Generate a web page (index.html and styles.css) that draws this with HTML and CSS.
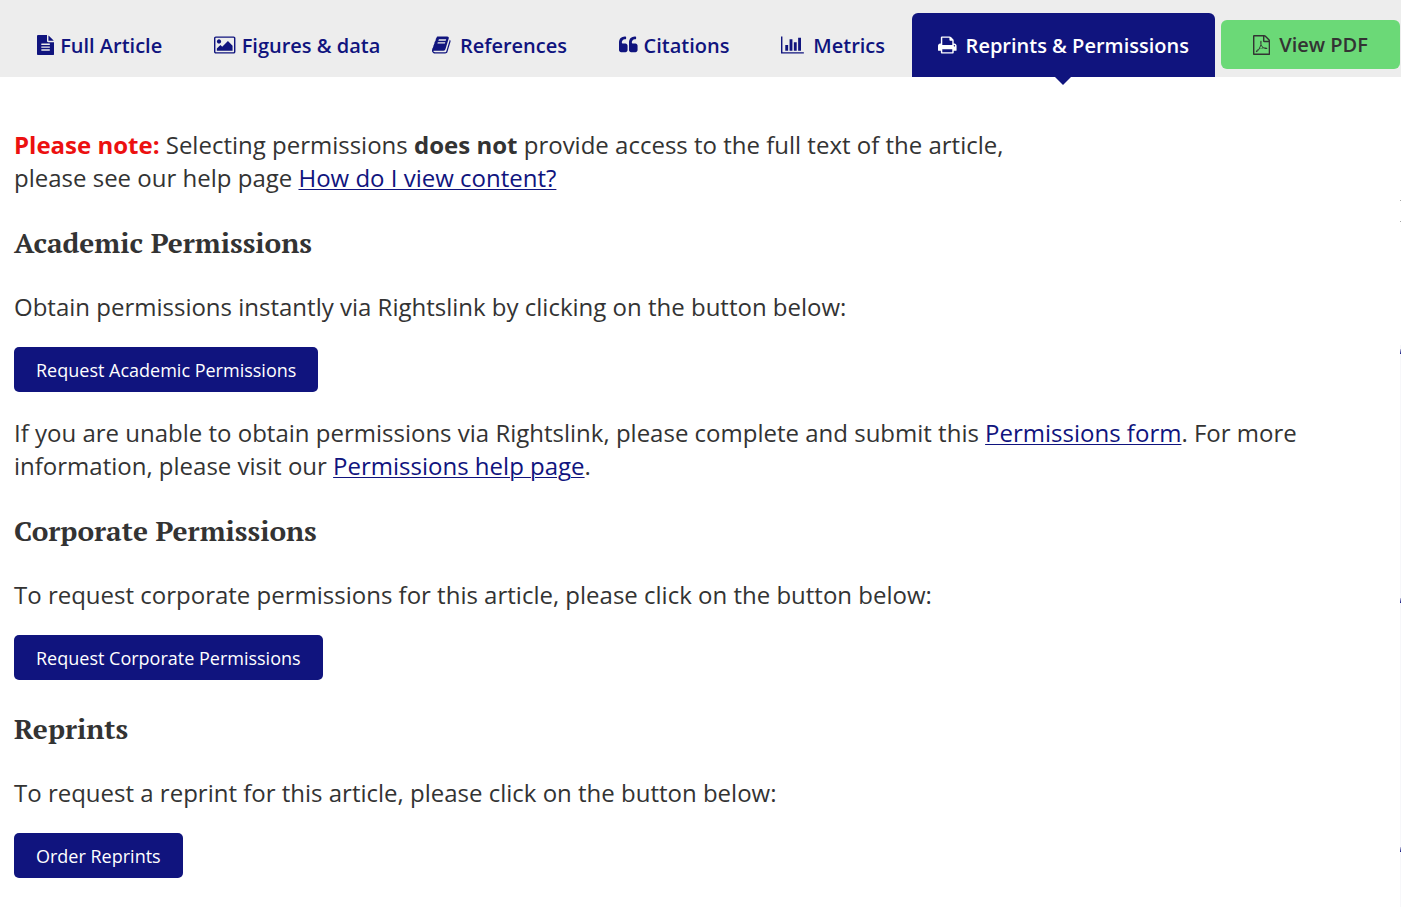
FILE: index.html
```html
<!DOCTYPE html>
<html lang="en">
<head>
  <meta charset="UTF-8" />
  <meta name="viewport" content="width=device-width, initial-scale=1" />
  <title>Reprints &amp; Permissions</title>
  <link rel="stylesheet" href="styles.css">
</head>
<body>
  <nav class="article-nav">
    <a class="tab" href="#full">
      <svg class="icon" viewBox="128 0 1536 1792" aria-hidden="true"><path d="M1596 476q14 14 28 36h-472v-472q22 14 36 28zm-476 164h544v1056q0 40-28 68t-68 28h-1344q-40 0-68-28t-28-68v-1600q0-40 28-68t68-28h800v544q0 40 28 68t68 28zm160 736v-64q0-14-9-23t-23-9h-704q-14 0-23 9t-9 23v64q0 14 9 23t23 9h704q14 0 23-9t9-23zm0-256v-64q0-14-9-23t-23-9h-704q-14 0-23 9t-9 23v64q0 14 9 23t23 9h704q14 0 23-9t9-23zm0-256v-64q0-14-9-23t-23-9h-704q-14 0-23 9t-9 23v64q0 14 9 23t23 9h704q14 0 23-9t9-23z"/></svg>
      <span>Full Article</span>
    </a>
    <a class="tab" href="#figures">
      <svg class="icon" viewBox="-64 0 1920 1792" aria-hidden="true"><path d="M576 576q0 80-56 136t-136 56-136-56-56-136 56-136 136-56 136 56 56 136zm1024 384v448h-1408v-192l320-320 160 160 512-512zm96-704h-1600q-13 0-22.500 9.500t-9.500 22.500v1216q0 13 9.500 22.500t22.500 9.500h1600q13 0 22.500-9.500t9.500-22.500v-1216q0-13-9.500-22.500t-22.500-9.500zm160 32v1216q0 66-47 113t-113 47h-1600q-66 0-113-47t-47-113v-1216q0-66 47-113t113-47h1600q66 0 113 47t47 113z"/></svg>
      <span>Figures &amp; data</span>
    </a>
    <a class="tab tab-wide" href="#references">
      <svg class="icon" viewBox="64 0 1664 1792" aria-hidden="true"><path d="M1703 478q40 57 18 129l-275 906q-19 64-76.500 107.500t-122.500 43.500h-923q-77 0-148.500-53.500t-99.500-131.500q-24-67-2-127 0-4 3-27t4-37q1-8-3-21.500t-3-19.500q2-11 8-21t16.500-23.500 16.500-23.500q23-38 45-91.500t30-91.500q3-10 .5-30t-.5-28q3-11 17-28t17-23q21-36 42-92t25-90q1-9-2.500-32t.5-28q4-13 22-30.500t22-22.500q19-26 42.500-84.500t27.500-96.500q1-8-3-25.500t-2-26.500q2-8 9-18t18-23 17-21q8-12 16.500-30.500t15-35 16-36 19.500-32 26.500-23.500 36-11.500 47.500 5.500l-1 3q38-9 51-9h761q74 0 114 56t18 130l-274 906q-36 119-71.500 153.500t-128.500 34.500h-869q-27 0-38 15-11 16-1 43 24 70 144 70h923q29 0 56-15.500t35-41.500l300-987q7-22 5-57 38 15 59 43zm-1064 2q-4 13 2 22.500t20 9.500h608q13 0 25.500-9.500t16.500-22.500l21-64q4-13-2-22.500t-20-9.500h-608q-13 0-25.500 9.500t-16.500 22.500zm-83 256q-4 13 2 22.500t20 9.500h608q13 0 25.500-9.500t16.500-22.500l21-64q4-13-2-22.500t-20-9.500h-608q-13 0-25.500 9.500t-16.500 22.500z"/></svg>
      <span>References</span>
    </a>
    <a class="tab" href="#citations">
      <svg class="icon" viewBox="64 0 1664 1792" aria-hidden="true"><path d="M832 960v384q0 80-56 136t-136 56h-384q-80 0-136-56t-56-136v-704q0-104 40.500-198.500t109.500-163.500 163.500-109.500 198.500-40.500h64q26 0 45 19t19 45v128q0 26-19 45t-45 19h-64q-106 0-181 75t-75 181v32q0 40 28 68t68 28h224q80 0 136 56t56 136zm896 0v384q0 80-56 136t-136 56h-384q-80 0-136-56t-56-136v-704q0-104 40.500-198.500t109.500-163.500 163.500-109.500 198.500-40.500h64q26 0 45 19t19 45v128q0 26-19 45t-45 19h-64q-106 0-181 75t-75 181v32q0 40 28 68t68 28h224q80 0 136 56t56 136z"/></svg>
      <span>Citations</span>
    </a>
    <a class="tab tab-wide" href="#metrics">
      <svg class="icon" viewBox="0 0 2048 1792" aria-hidden="true"><path d="M640 896v512h-256v-512h256zm384-512v1024h-256v-1024h256zm1024 1152v128h-2048v-1536h128v1408h1920zm-640-896v768h-256v-768h256zm384-384v1152h-256v-1152h256z"/></svg>
      <span>Metrics</span>
    </a>
    <a class="tab tab-wide active" href="#permissions" aria-current="page">
      <svg class="icon" viewBox="64 0 1664 1792" aria-hidden="true"><path d="M448 1536h896v-256h-896v256zm0-640h896v-384h-160q-40 0-68-28t-28-68v-160h-640v640zm1152 64q0-26-19-45t-45-19-45 19-19 45 19 45 45 19 45-19 19-45zm128 0v416q0 13-9.500 22.500t-22.500 9.500h-224v160q0 40-28 68t-68 28h-960q-40 0-68-28t-28-68v-160h-224q-13 0-22.500-9.500t-9.500-22.500v-416q0-79 56.500-135.500t135.500-56.500h64v-544q0-40 28-68t68-28h672q40 0 88 20t76 48l152 152q28 28 48 76t20 88v256h64q79 0 135.500 56.500t56.500 135.500z"/></svg>
      <span>Reprints &amp; Permissions</span>
    </a>
    <a class="pdf-link" href="#pdf">
      <svg class="icon" viewBox="128 0 1536 1792" aria-hidden="true"><path d="M1596 380q28 28 48 76t20 88v1152q0 40-28 68t-68 28h-1344q-40 0-68-28t-28-68v-1600q0-40 28-68t68-28h896q40 0 88 20t76 48zm-444-244v376h376q-10-29-22-41l-313-313q-12-12-41-22zm384 1528v-1024h-416q-40 0-68-28t-28-68v-416h-768v1536h1280zm-514-593q33 26 84 56 59-7 117-7 147 0 177 49 16 22 2 52 0 1-1 2l-2 2v1q-6 38-71 38-48 0-115-20t-130-53q-221 24-392 83-153 262-242 262-15 0-28-7l-24-12q-1-1-6-5-10-10-6-36 9-40 56-91.500t132-96.500q14-9 23 6 2 2 2 4 52-85 107-197 68-136 104-262-24-82-30.500-159.500t6.500-127.500q11-40 42-40h22q23 0 35 15 18 21 9 68-2 6-4 8 1 3 1 8v30q-2 123-14 192 55 164 146 238zm-576 411q52-24 137-158-51 40-87.500 84t-49.500 74zm398-920q-15 42-2 132 1-7 7-44 0-3 7-43 1-4 4-8-1-1-1-2t-1-2-1-2q-1-22-13-36 0 1-1 2v2zm-124 661q135-54 284-81-2-1-13-9.500t-16-13.500q-76-67-127-176-27 86-83 197-30 56-45 83zm646-16q-24-24-140-24 76 28 124 28 14 0 18-1 0-1-2-3z"/></svg>
      <span>View PDF</span>
    </a>
  </nav>

  <div class="page">
    <main class="content">
      <p><strong class="note">Please note:</strong> Selecting permissions <strong>does not</strong> provide access to the full text of the article,<br>please see our help page <a href="#help">How do I view content?</a></p>

      <h2>Academic Permissions</h2>
      <p>Obtain permissions instantly via Rightslink by clicking on the button below:</p>
      <button type="button" class="btn">Request Academic Permissions</button>
      <p>If you are unable to obtain permissions via Rightslink, please complete and submit this <a href="#form">Permissions form</a>. For more information, please visit our <a href="#permissions-help">Permissions help page</a>.</p>

      <h2>Corporate Permissions</h2>
      <p>To request corporate permissions for this article, please click on the button below:</p>
      <button type="button" class="btn">Request Corporate Permissions</button>

      <h2>Reprints</h2>
      <p>To request a reprint for this article, please click on the button below:</p>
      <button type="button" class="btn">Order Reprints</button>
    </main>

    <!-- left edge of the related articles panel -->
    <aside class="related">
      <div class="related-head"></div>
      <div class="related-list">
        <div class="related-item"></div>
        <div class="related-item"></div>
        <div class="related-item"></div>
      </div>
    </aside>
  </div>
</body>
</html>
```
FILE: styles.css
```css
:root {
  --navy: #10147e;
  --text: #333;
  --bar: #ededed;
  --green: #6bd977;
  --red: #ec1010;
}

* {
  box-sizing: border-box;
}

body {
  margin: 0;
  background: #fff;
  color: var(--text);
  font-family: "Open Sans", Arial, sans-serif;
  font-size: 24px;
  line-height: 33px;
}

a {
  color: var(--navy);
  text-decoration-thickness: 1px;
  text-underline-offset: 2px;
}

/* Tab bar */
.article-nav {
  display: flex;
  align-items: flex-end;
  gap: 2px;
  height: 77px;
  padding-left: 12px;
  background: var(--bar);
  font-size: 20px;
  font-weight: 600;
  white-space: nowrap;
}

.tab,
.pdf-link {
  display: flex;
  align-items: center;
  gap: 6px;
  text-decoration: none;
}

.tab {
  position: relative;
  height: 64px;
  padding: 0 25px;
  border-radius: 6px 6px 0 0;
}

.tab-wide,
.pdf-link {
  gap: 9px;
}

.tab.active {
  padding: 0 26px;
  background: var(--navy);
  color: #fff;
}

/* Pointer under the open tab */
.tab.active::after {
  content: "";
  position: absolute;
  top: 100%;
  left: 50%;
  margin-left: -8px;
  border: 8px solid transparent;
  border-top-color: var(--navy);
  border-bottom: 0;
}

.pdf-link {
  flex: 1;
  justify-content: center;
  height: 49px;
  margin: 0 1px 8px 4px;
  border-radius: 6px;
  background: var(--green);
  color: var(--text);
}

.icon {
  flex: none;
  width: auto;
  height: 20px;
  fill: currentColor;
}

/* Content */
.page {
  display: flex;
}

.content {
  flex: 1;
  padding: 51px 84px 30px 14px;
}

p {
  margin: 0;
}

.note {
  color: var(--red);
}

h2 {
  margin: 32px 0 31px;
  font-family: "PT Serif", "Liberation Serif", serif;
  font-size: 28px;
  font-weight: 700;
  line-height: 33px;
}

.btn {
  display: block;
  height: 45px;
  margin: 24px 0;
  padding: 0 22px;
  border: 0;
  border-radius: 5px;
  background: var(--navy);
  color: #fff;
  font-family: inherit;
  font-size: 18px;
  cursor: pointer;
}

/* Related articles */
.related {
  width: 1px;
  padding-top: 123px;
}

.related-head {
  height: 22px;
  border: solid #aaa;
  border-width: 1px 0;
}

.related-list {
  margin-top: 123px;
  background: #f7f7fa;
}

.related-item {
  height: 249px;
  padding-top: 4px;
}

.related-item:last-child {
  height: 64px;
}

.related-item::before {
  content: "";
  display: block;
  height: 5px;
  background: linear-gradient(#c8c8e0, var(--navy));
}
```
